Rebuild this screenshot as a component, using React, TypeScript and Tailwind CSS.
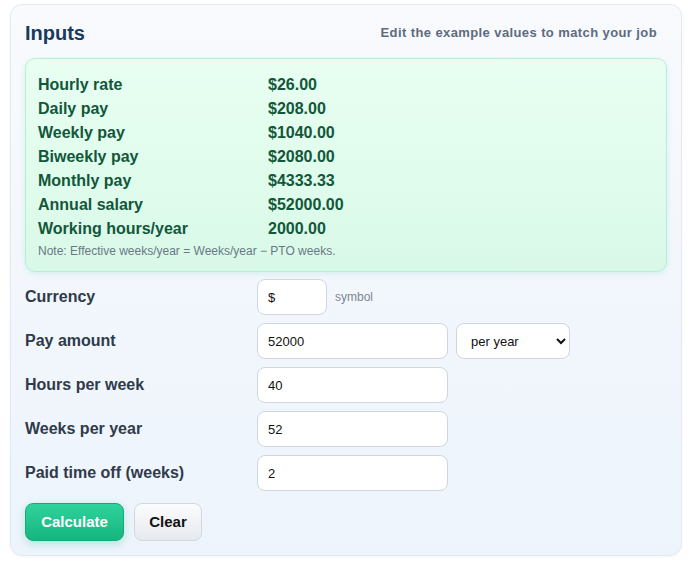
import React from "react";

const rows: [string, string][] = [
  ["Hourly rate", "$26.00"],
  ["Daily pay", "$208.00"],
  ["Weekly pay", "$1040.00"],
  ["Biweekly pay", "$2080.00"],
  ["Monthly pay", "$4333.33"],
  ["Annual salary", "$52000.00"],
  ["Working hours/year", "2000.00"],
];

function Field({ label, children }: { label: string; children: React.ReactNode }) {
  return (
    <div className="flex items-center h-[36px]">
      <div className="w-[232px] text-[16px] font-bold text-[#2f3a4a]">{label}</div>
      <div className="flex items-center gap-2">{children}</div>
    </div>
  );
}

const inputCls =
  "h-[36px] rounded-[8px] border border-[#cfd6e0] bg-white px-[10px] text-[13px] text-[#111] outline-none";

export default function App() {
  return (
    <div
      className="w-[690px] h-[562px] bg-white pt-[4px] pl-[10px]"
      style={{ fontFamily: '"Liberation Sans", Arial, sans-serif' }}
    >
      <div className="w-[672px] h-[552px] rounded-[12px] border border-[#e3e9f0] bg-gradient-to-b from-[#f8fafd] to-[#edf4fc] px-[14px] pt-[16px] shadow-[0_1px_3px_rgba(0,0,0,0.04)]">
        <div className="flex items-center justify-between h-[24px]">
          <h2 className="text-[20px] font-bold text-[#173a5e]">Inputs</h2>
          <div className="text-[13px] font-bold text-[#5d6b7e] tracking-[0.4px] pr-[10px]">
            Edit the example values to match your job
          </div>
        </div>
        <div className="mt-[13px] w-[642px] h-[214px] rounded-[10px] border border-[#b9eed2] bg-gradient-to-b from-[#e8fff2] to-[#d9f9e8] px-[12px] pt-[14px] shadow-[0_2px_6px_rgba(16,185,129,0.12)]">
          {rows.map(([l, v]) => (
            <div key={l} className="flex items-center h-[24px] text-[16px] font-bold text-[#12573a]">
              <div className="w-[230px]">{l}</div>
              <div>{v}</div>
            </div>
          ))}
          <div className="mt-[1px] text-[12px] text-[#6b7785]">
            Note: Effective weeks/year = Weeks/year − PTO weeks.
          </div>
        </div>
        <div className="mt-[7px] flex flex-col gap-[8px]">
          <Field label="Currency">
            <input className={`${inputCls} w-[70px]`} defaultValue="$" />
            <span className="text-[12px] text-[#7b8794]">symbol</span>
          </Field>
          <Field label="Pay amount">
            <input className={`${inputCls} w-[191px]`} defaultValue="52000" />
            <select
              className="h-[36px] w-[114px] rounded-[8px] border border-[#cfd6e0] bg-white px-[10px] text-[13px] text-[#111]"
              defaultValue="year"
            >
              <option value="year">per year</option>
            </select>
          </Field>
          <Field label="Hours per week">
            <input className={`${inputCls} w-[191px]`} defaultValue="40" />
          </Field>
          <Field label="Weeks per year">
            <input className={`${inputCls} w-[191px]`} defaultValue="52" />
          </Field>
          <Field label="Paid time off (weeks)">
            <input className={`${inputCls} w-[191px]`} defaultValue="2" />
          </Field>
        </div>
        <div className="mt-[12px] flex gap-[10px]">
          <button className="h-[38px] w-[99px] rounded-[8px] border border-[#17a877] bg-gradient-to-b from-[#2fd39c] to-[#14b57f] text-[15px] font-bold text-white shadow-[0_3px_8px_rgba(16,185,129,0.25)]">
            Calculate
          </button>
          <button className="h-[38px] w-[68px] rounded-[8px] border border-[#d3d8df] bg-gradient-to-b from-[#fbfcfd] to-[#e6e9ee] text-[15px] font-bold text-[#111]">
            Clear
          </button>
        </div>
      </div>
    </div>
  );
}
